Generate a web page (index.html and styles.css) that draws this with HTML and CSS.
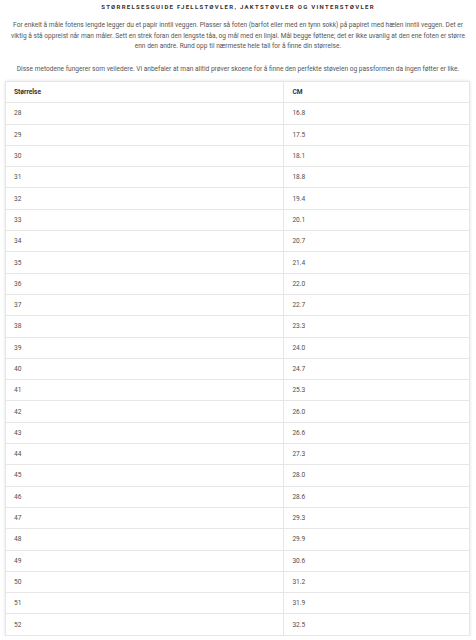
FILE: index.html
```html
<!DOCTYPE html>
<html lang="no">
<head>
<meta charset="utf-8">
<link rel="stylesheet" href="styles.css">
</head>
<body>
<div class="guide">
  <h2 class="title">Størrelsesguide fjellstøvler, jaktstøvler og vinterstøvler</h2>
  <p class="intro">For enkelt å måle fotens lengde legger du et papir inntil veggen. Plasser så foten (barfot eller med en tynn sokk) på papiret med hælen inntil veggen. Det er viktig å stå oppreist når man måler. Sett en strek foran den lengste tåa, og mål med en linjal. Mål begge føttene; det er ikke uvanlig at den ene foten er større enn den andre. Rund opp til nærmeste hele tall for å finne din størrelse.</p>
  <p class="note">Disse metodene fungerer som veiledere. Vi anbefaler at man alltid prøver skoene for å finne den perfekte støvelen og passformen da ingen føtter er like.</p>
  <table class="sizes">
    <thead>
      <tr><th class="c1">Størrelse</th><th class="c2">CM</th></tr>
    </thead>
    <tbody>
      <tr><td>28</td><td>16.8</td></tr>
      <tr><td>29</td><td>17.5</td></tr>
      <tr><td>30</td><td>18.1</td></tr>
      <tr><td>31</td><td>18.8</td></tr>
      <tr><td>32</td><td>19.4</td></tr>
      <tr><td>33</td><td>20.1</td></tr>
      <tr><td>34</td><td>20.7</td></tr>
      <tr><td>35</td><td>21.4</td></tr>
      <tr><td>36</td><td>22.0</td></tr>
      <tr><td>37</td><td>22.7</td></tr>
      <tr><td>38</td><td>23.3</td></tr>
      <tr><td>39</td><td>24.0</td></tr>
      <tr><td>40</td><td>24.7</td></tr>
      <tr><td>41</td><td>25.3</td></tr>
      <tr><td>42</td><td>26.0</td></tr>
      <tr><td>43</td><td>26.6</td></tr>
      <tr><td>44</td><td>27.3</td></tr>
      <tr><td>45</td><td>28.0</td></tr>
      <tr><td>46</td><td>28.6</td></tr>
      <tr><td>47</td><td>29.3</td></tr>
      <tr><td>48</td><td>29.9</td></tr>
      <tr><td>49</td><td>30.6</td></tr>
      <tr><td>50</td><td>31.2</td></tr>
      <tr><td>51</td><td>31.9</td></tr>
      <tr><td>52</td><td>32.5</td></tr>
    </tbody>
  </table>
</div>
</body>
</html>
```
FILE: styles.css
```css
html, body {
  margin: 0;
  padding: 0;
  background: #fff;
}
body {
  font-family: "Roboto", "Liberation Sans", sans-serif;
  color: #4a4a4a;
}
.guide {
  padding: 2px 5px 0 5px;
}
.title {
  margin: 0;
  text-align: center;
  text-transform: uppercase;
  font-size: 6px;
  line-height: 9px;
  letter-spacing: 1.3px;
  font-weight: 700;
  color: #333;
}
.intro {
  margin: 9px 0 0 0;
  text-align: center;
  font-size: 6.6px;
  line-height: 10.5px;
  color: #555;
}
.note {
  margin: 12px 0 0 0;
  text-align: center;
  font-size: 6.6px;
  line-height: 10.5px;
  color: #555;
}
.sizes {
  margin-top: 7px;
  width: 465px;
  border-collapse: collapse;
  box-shadow: 0 0 3px rgba(0, 0, 0, 0.12);
  font-size: 6.6px;
  color: #4f4f4f;
}
.sizes th, .sizes td {
  border: 1px solid #e6e6e6;
  height: 20.3px;
  padding: 0 8px;
  text-align: left;
  vertical-align: middle;
}
.sizes th {
  font-weight: 700;
  color: #333;
}
.sizes .c1 {
  width: 60%;
}
```
